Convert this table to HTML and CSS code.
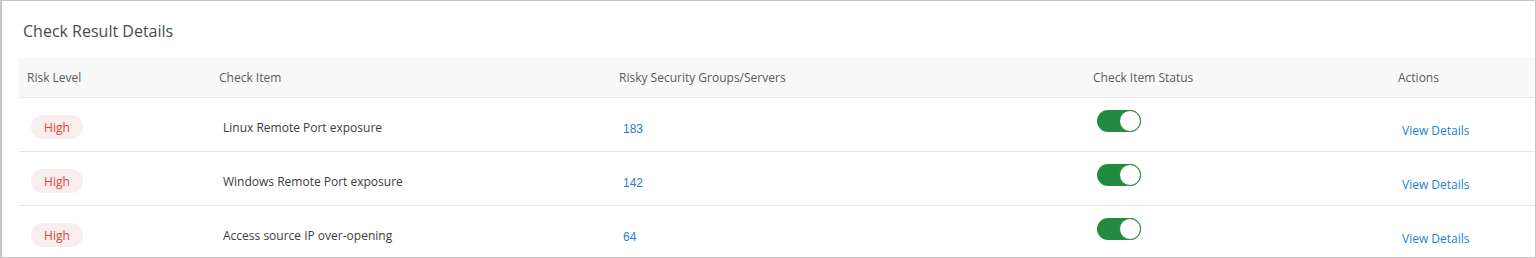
FILE: index.html
```html
<!DOCTYPE html>
<html lang="en">
  <head>
    <meta charset="UTF-8" />
    <title>Check Result Details</title>
    <link rel="stylesheet" href="styles.css">
  </head>
  <body>
    <div class="panel">
      <h2 class="title">Check Result Details</h2>
      <table class="result-table">
        <colgroup>
          <col class="col-risk" />
          <col class="col-item" />
          <col class="col-groups" />
          <col class="col-status" />
          <col />
        </colgroup>
        <thead>
          <tr>
            <th>Risk Level</th>
            <th>Check Item</th>
            <th>Risky Security Groups/Servers</th>
            <th>Check Item Status</th>
            <th>Actions</th>
          </tr>
        </thead>
        <tbody>
          <tr>
            <td class="risk"><span class="badge">High</span></td>
            <td class="item">Linux Remote Port exposure</td>
            <td class="count"><a href="#">183</a></td>
            <td class="status"><span class="switch on"></span></td>
            <td class="action"><a href="#">View Details</a></td>
          </tr>
          <tr>
            <td class="risk"><span class="badge">High</span></td>
            <td class="item">Windows Remote Port exposure</td>
            <td class="count"><a href="#">142</a></td>
            <td class="status"><span class="switch on"></span></td>
            <td class="action"><a href="#">View Details</a></td>
          </tr>
          <tr>
            <td class="risk"><span class="badge">High</span></td>
            <td class="item">Access source IP over-opening</td>
            <td class="count"><a href="#">64</a></td>
            <td class="status"><span class="switch on"></span></td>
            <td class="action"><a href="#">View Details</a></td>
          </tr>
        </tbody>
      </table>
    </div>
  </body>
</html>
```

FILE: styles.css
```css
html,
body {
  margin: 0;
  padding: 0;
  background: #fff;
}

.panel {
  box-sizing: border-box;
  height: 258px;
  overflow: hidden;
  border: 1px solid #c6c6c6;
  border-left-width: 2px;
  padding-left: 17px;
  font-family: "Open Sans", "Noto Sans", sans-serif;
}

.title {
  margin: 0;
  height: 57px;
  padding-left: 4px;
  font-size: 16px;
  font-weight: normal;
  line-height: 60px;
  color: #4a4a4a;
}

.result-table {
  width: 100%;
  border-collapse: collapse;
  table-layout: fixed;
  font-size: 12px;
}

.col-risk {
  width: 192px;
}

.col-item {
  width: 400px;
}

.col-groups {
  width: 474px;
}

.col-status {
  width: 305px;
}

.result-table th {
  height: 39px;
  padding: 0 8px;
  text-align: left;
  font-weight: normal;
  color: #5a5a5a;
  background: #f8f8f8;
  border-bottom: 1px solid #e6e6e6;
}

.result-table td {
  box-sizing: border-box;
  height: 54px;
  padding: 22px 12px 0;
  line-height: 16px;
  color: #3c3c3c;
  border-bottom: 1px solid #e6e6e6;
  vertical-align: top;
}

.result-table a {
  color: #1b7fd6;
  text-decoration: none;
}

.result-table .risk {
  padding-top: 17px;
}

.badge {
  display: inline-block;
  width: 52px;
  height: 24px;
  line-height: 25px;
  text-align: center;
  border-radius: 12px;
  background: #f9eeed;
  color: #e0453a;
  font-size: 12px;
}

.result-table .count {
  padding-top: 23px;
  font-family: "Liberation Sans", Arial, sans-serif;
}

.result-table .status {
  padding-top: 12px;
}

.switch {
  display: block;
  position: relative;
  width: 44px;
  height: 22px;
  border-radius: 11px;
  background: #228b3f;
}

.switch::after {
  content: "";
  position: absolute;
  top: 0;
  right: 0;
  width: 22px;
  height: 22px;
  box-sizing: border-box;
  border-radius: 50%;
  background: #fff;
  border: 1px solid #228b3f;
}

.result-table .action {
  padding-top: 25px;
}
```
